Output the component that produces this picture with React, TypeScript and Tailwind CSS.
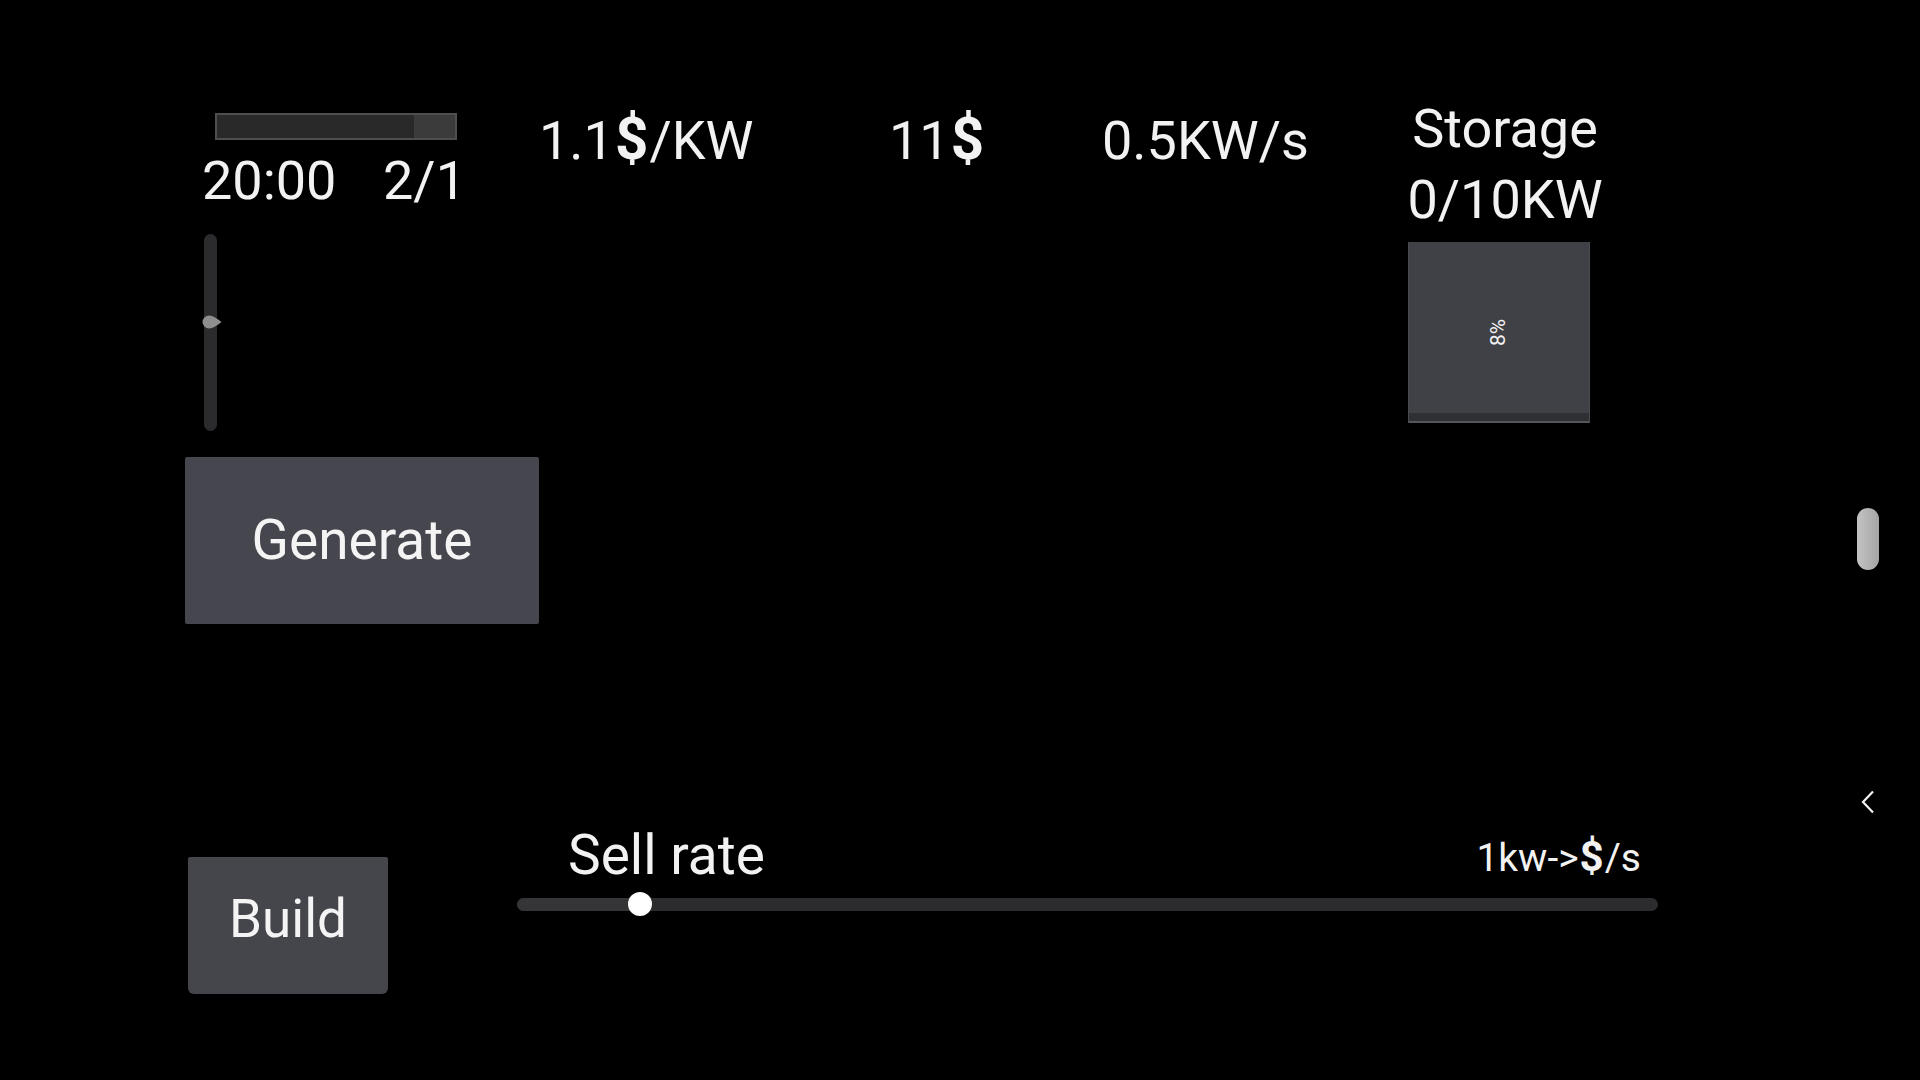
import React from 'react';

const Dollar = () => <span className="font-bold text-[1.08em] px-[1px]">$</span>;

function ProgressBar({ value }: { value: number }) {
  return (
    <div className="ml-[30px] w-[242px] h-[27px] border-2 border-[#4e4e4f] bg-[#3b3b3c] flex">
      <div className="h-full bg-[#29292a]" style={{ width: `${value}%` }} />
    </div>
  );
}

function VerticalSlider() {
  return (
    <div className="relative ml-[19px] mt-[26px] w-[13px] h-[197px] rounded-full bg-[#2b2b2d]">
      <svg className="absolute left-[-2px] top-[81px]" width="20" height="14" viewBox="0 0 20 14">
        <path d="M7 0.5 C11 0.5 15 3.5 19.5 7 C15 10.5 11 13.5 7 13.5 A6.5 6.5 0 0 1 7 0.5 Z" fill="#8e8e8f" />
      </svg>
    </div>
  );
}

function SellRate() {
  return (
    <div className="ml-[129px] w-[1141px] flex flex-col">
      <div className="flex items-baseline justify-between pl-[51px] pr-[17px]">
        <span className="text-[55px] leading-none">Sell rate</span>
        <span className="text-[39px] leading-none relative top-[-3px]">
          1kw-&gt;<Dollar />/s
        </span>
      </div>
      <div className="relative mt-[15px] h-[13px] rounded-full bg-[#2c2c2e]">
        <div className="h-full w-[123px] rounded-l-full bg-[#353537]" />
        <div className="absolute left-[111px] top-[-6px] w-[24px] h-[24px] rounded-full bg-white" />
      </div>
    </div>
  );
}

export default function App() {
  return (
    <div
      className="relative w-[1920px] h-[1080px] overflow-hidden bg-black text-[#f2f2f2] flex flex-col"
      style={{ fontFamily: 'Roboto, "Noto Sans", sans-serif' }}
    >
      {/* top area */}
      <div className="flex items-start pl-[185px] pt-[96px]">
        <div className="w-[354px] shrink-0 pt-[17px] flex flex-col">
          <ProgressBar value={82.6} />
          <div className="mt-[14px] ml-[17px] w-[264px] flex justify-between text-[54px] leading-none">
            <span>20:00</span>
            <span>2/1</span>
          </div>
          <VerticalSlider />
          <button className="mt-[26px] w-[354px] h-[167px] rounded-[2px] bg-[#46474e] flex items-center justify-center text-[55px] leading-none text-[#f4f4f4]">
            Generate
          </button>
        </div>

        <div className="flex items-start pt-[14px] text-[54px] leading-none">
          <div className="w-[350px]">
            1.1<Dollar />/KW
          </div>
          <div className="w-[213px]">
            11<Dollar />
          </div>
          <div className="w-[306px] pt-[4px]">0.5KW/s</div>
        </div>

        <div className="w-[194px] flex flex-col items-center text-[54px] leading-[65px]">
          <span>Storage</span>
          <span className="mt-[6px]">0/10KW</span>
          <div className="relative self-start mt-[10px] w-[182px] h-[181px] bg-[#404147] border-x border-[#4a4b50] flex items-center justify-center overflow-hidden">
            <span className="-rotate-90 text-[21px] leading-none">8%</span>
            <div className="absolute inset-x-0 bottom-0 h-[10px] bg-[#2f3034] border-b-2 border-[#55565a]" />
          </div>
        </div>
      </div>

      {/* bottom area */}
      <div className="flex items-start pl-[188px] mt-[204px]">
        <button className="mt-[29px] w-[200px] h-[137px] rounded-t-[2px] rounded-b-[6px] bg-[#45464c] flex items-center justify-center pb-[12px] text-[53px] leading-none text-[#f4f4f4]">
          Build
        </button>
        <SellRate />
      </div>

      {/* right edge handle */}
      <div className="absolute right-[41px] top-[508px] w-[22px] flex flex-col items-center">
        <div className="w-[22px] h-[62px] rounded-full bg-gradient-to-r from-[#c4c4c4] to-[#a4a4a4]" />
        <svg className="mt-[220px]" width="14" height="24" viewBox="0 0 14 24">
          <polyline points="12,1.5 2,12 12,22.5" fill="none" stroke="#f2f2f2" strokeWidth="2.2" />
        </svg>
      </div>
    </div>
  );
}
